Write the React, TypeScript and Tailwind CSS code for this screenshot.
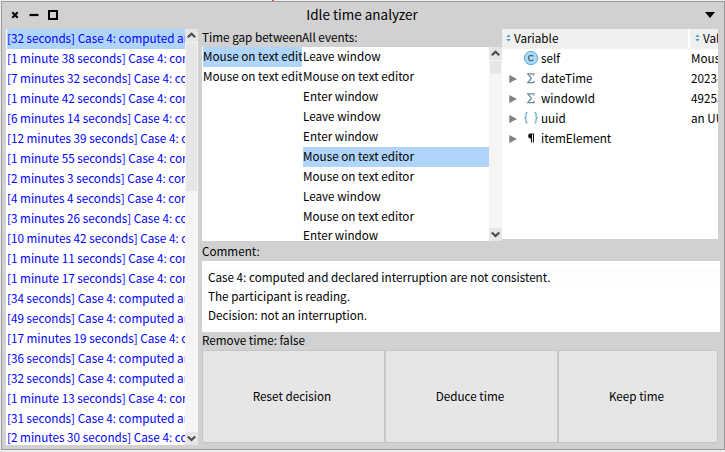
import React from "react";

const idle = [
  "[32 seconds] Case 4: computed and",
  "[1 minute 38 seconds] Case 4: com",
  "[7 minutes 32 seconds] Case 4: com",
  "[1 minute 42 seconds] Case 4: com",
  "[6 minutes 14 seconds] Case 4: com",
  "[12 minutes 39 seconds] Case 4: co",
  "[1 minute 55 seconds] Case 4: com",
  "[2 minutes 3 seconds] Case 4: com",
  "[4 minutes 4 seconds] Case 4: com",
  "[3 minutes 26 seconds] Case 4: com",
  "[10 minutes 42 seconds] Case 4: co",
  "[1 minute 11 seconds] Case 4: com",
  "[1 minute 17 seconds] Case 4: com",
  "[34 seconds] Case 4: computed and",
  "[49 seconds] Case 4: computed and",
  "[17 minutes 19 seconds] Case 4: co",
  "[36 seconds] Case 4: computed and",
  "[32 seconds] Case 4: computed and",
  "[1 minute 13 seconds] Case 4: com",
  "[31 seconds] Case 4: computed and",
  "[2 minutes 30 seconds] Case 4: com",
];

const events = [
  "Leave window",
  "Mouse on text editor",
  "Enter window",
  "Leave window",
  "Enter window",
  "Mouse on text editor",
  "Mouse on text editor",
  "Leave window",
  "Mouse on text editor",
  "Enter window",
];

const variables = [
  { name: "self", value: "Mouse", icon: "class" },
  { name: "dateTime", value: "2023-0", icon: "sigma" },
  { name: "windowId", value: "492530", icon: "sigma" },
  { name: "uuid", value: "an UUID", icon: "braces" },
  { name: "itemElement", value: "", icon: "pilcrow" },
];

function Arrow({ up = false }: { up?: boolean }) {
  return (
    <div className="flex h-[13px] w-[13px] shrink-0 items-center justify-center bg-[#e6e6e6]">
      <svg width="9" height="7" viewBox="0 0 9 7" fill="none" stroke="#4b4b4b" strokeWidth="2.2">
        <path d={up ? "M0.8 5.3 4.5 1.8 8.2 5.3" : "M0.8 1.5 4.5 5 8.2 1.5"} />
      </svg>
    </div>
  );
}

function ScrollBar({ thumb }: { thumb: string }) {
  return (
    <div className="flex w-[13px] shrink-0 flex-col bg-[#f5f5f5]">
      <Arrow up />
      <div className={"mx-px mt-px shrink-0 bg-[#e6e6e6] " + thumb} />
      <div className="flex-1" />
      <Arrow />
    </div>
  );
}

function VarIcon({ kind }: { kind: string }) {
  if (kind === "class")
    return (
      <svg className="shrink-0" width="16" height="16" viewBox="0 0 16 16" fill="none">
        <circle cx="8" cy="8" r="6.6" fill="#a9dbf7" stroke="#56a8d8" />
        <path d="M10.3 6.3A2.7 2.7 0 1 0 10.3 9.7" stroke="#4a6678" strokeWidth="1.3" />
      </svg>
    );
  if (kind === "sigma")
    return (
      <svg className="shrink-0" width="16" height="16" viewBox="0 0 16 16" fill="none" stroke="#6c8ca3" strokeWidth="1.3">
        <path d="M10.8 5.5V3.8H4.8L8.4 8.2 4.8 12.6h6.2V10.9" />
      </svg>
    );
  if (kind === "braces")
    return (
      <svg className="shrink-0" width="16" height="16" viewBox="0 0 16 16" fill="none" stroke="#62a8cb" strokeWidth="1.2">
        <path d="M4.7 2.5H4Q3 2.5 3 3.7V6.2Q3 7.8 1.4 7.8 3 7.8 3 9.4V11.8Q3 13 4 13H4.7M11.3 2.5H12Q13 2.5 13 3.7V6.2Q13 7.8 14.6 7.8 13 7.8 13 9.4V11.8Q13 13 12 13H11.3" />
      </svg>
    );
  return (
    <svg className="shrink-0" width="16" height="16" viewBox="0 0 16 16">
      <path d="M7.4 3.4H11V12.4H9.9V4.3H9V12.4H7.9V8.4A2.5 2.5 0 0 1 7.4 3.4Z" fill="#111" />
    </svg>
  );
}

function Sort() {
  return (
    <svg className="shrink-0" width="5" height="8" viewBox="0 0 5 8" fill="#4f9ac4">
      <path d="M2.5 0.5 4.7 3H.3ZM2.5 7.5 4.7 5H.3Z" />
    </svg>
  );
}

export default function App() {
  return (
    <div className="flex h-[452px] w-[725px] flex-col overflow-hidden bg-[#eeeeee] pl-px font-['Noto_Sans_CJK_SC','Noto_Sans',sans-serif] text-[11.7px] leading-[18px] whitespace-nowrap text-black">
      <div className="h-px shrink-0 pl-[271px]">
        <div className="h-px w-[2px] bg-[#ff4040]" />
      </div>
      <div className="flex h-[449px] w-[724px] shrink-0 flex-col border border-[#999999] bg-[#d1d1d1]">
        <div className="flex h-[27px] shrink-0 items-center">
          <svg className="shrink-0" width="60" height="27" viewBox="2 2 60 27" fill="none" stroke="#000">
            <path d="M12.3 12.3 17.7 17.7M17.7 12.3 12.3 17.7" strokeWidth="2" />
            <path d="M29.5 15h9" strokeWidth="2.2" />
            <rect x="49" y="11" width="8" height="8" strokeWidth="2" />
          </svg>
          <div className="h-[27px] flex-1 pr-[43px] text-center text-[13.5px] leading-[25px]">Idle time analyzer</div>
          <svg className="mt-[-2px] mr-[9px] shrink-0" width="10" height="6" viewBox="0 0 10 6">
            <path d="M0 0H10L5 6Z" />
          </svg>
        </div>
        <div className="flex h-[416px] shrink-0 pl-[4px]">
          <div className="flex w-[192px] shrink-0 bg-white">
            <div className="w-[179px] overflow-hidden pl-px text-[#0000ff]">
              {idle.map((t, i) => (
                <div key={i} className={"h-[20px] overflow-hidden last:-mt-px " + (i === 0 ? "bg-[#b0d5fb]" : "")}>{t}</div>
              ))}
            </div>
            <ScrollBar thumb="h-[148px]" />
          </div>
          <div className="ml-[4px] flex w-[518px] shrink-0 flex-col">
            <div className="flex h-[212px] shrink-0">
              <div className="flex w-[300px] shrink-0 flex-col">
                <div className="flex h-[18px] shrink-0 leading-[16px]">
                  <div className="w-[100px] shrink-0 overflow-hidden">Time gap between</div>
                  <div>All events:</div>
                </div>
                <div className="flex h-[194px] bg-white">
                  <div className="w-[100px] shrink-0 overflow-hidden pl-px">
                    <div className="h-[20px] overflow-hidden bg-[#b0d5fb]">Mouse on text editor</div>
                    <div className="h-[20px] overflow-hidden">Mouse on text editor</div>
                  </div>
                  <div className="w-[187px] overflow-hidden pl-px">
                    {events.map((t, i) => (
                      <div key={i} className={"h-[20px] last:-mt-px " + (i === 5 ? "bg-[#b0d5fb]" : "")}>{t}</div>
                    ))}
                  </div>
                  <ScrollBar thumb="h-[13px]" />
                </div>
              </div>
              <div className="flex h-[210px] w-[216px] flex-col overflow-hidden bg-white">
                <div className="flex h-[20px] shrink-0">
                  <div className="flex w-[186px] shrink-0 items-center gap-[3px] bg-[#f0f0f0] pb-[2px] pl-[4px]"><Sort />Variable</div>
                  <div className="ml-[2px] flex flex-1 items-center gap-[3px] overflow-hidden bg-[#f0f0f0] pb-[2px] pl-[5px]"><Sort />Value</div>
                </div>
                {variables.map((v) => (
                  <div key={v.name} className="flex h-[20px] shrink-0 items-center pb-[2px]">
                    <div className="flex w-[21px] shrink-0 pt-[2px] pl-[7px]">
                      {v.icon !== "class" && (
                        <svg width="8" height="8" viewBox="0 0 8 8"><path d="M0.3 0 8 4 0.3 8Z" fill="#808080" /></svg>
                      )}
                    </div>
                    <VarIcon kind={v.icon} />
                    <div className="w-[152px] shrink-0 pl-[2px]">{v.name}</div>
                    <div className="flex-1 overflow-hidden">{v.value}</div>
                  </div>
                ))}
              </div>
            </div>
            <div className="h-[20px] shrink-0 leading-[20px]">Comment:</div>
            <div className="h-[71px] shrink-0 bg-white pt-[6px] leading-[19px]">
              <div className="bg-[#fbfdff] pl-[6px]">Case 4: computed and declared interruption are not consistent.</div>
              <div className="pl-[6px]">The participant is reading.</div>
              <div className="pl-[6px]">Decision: not an interruption.</div>
            </div>
            <div className="h-[18px] shrink-0 leading-[16px]">Remove time: false</div>
            <div className="flex h-[93px] w-[516px] shrink-0">
              <button className="w-[183px] border border-[#c6c6c6] bg-[#e6e6e6] pr-[3px] pb-[2px]">Reset decision</button>
              <button className="w-[173px] border border-[#c6c6c6] bg-[#e6e6e6] pr-[3px] pb-[2px]">Deduce time</button>
              <button className="w-[160px] border border-[#c6c6c6] bg-[#e6e6e6] pr-[3px] pb-[2px]">Keep time</button>
            </div>
          </div>
        </div>
      </div>
    </div>
  );
}
